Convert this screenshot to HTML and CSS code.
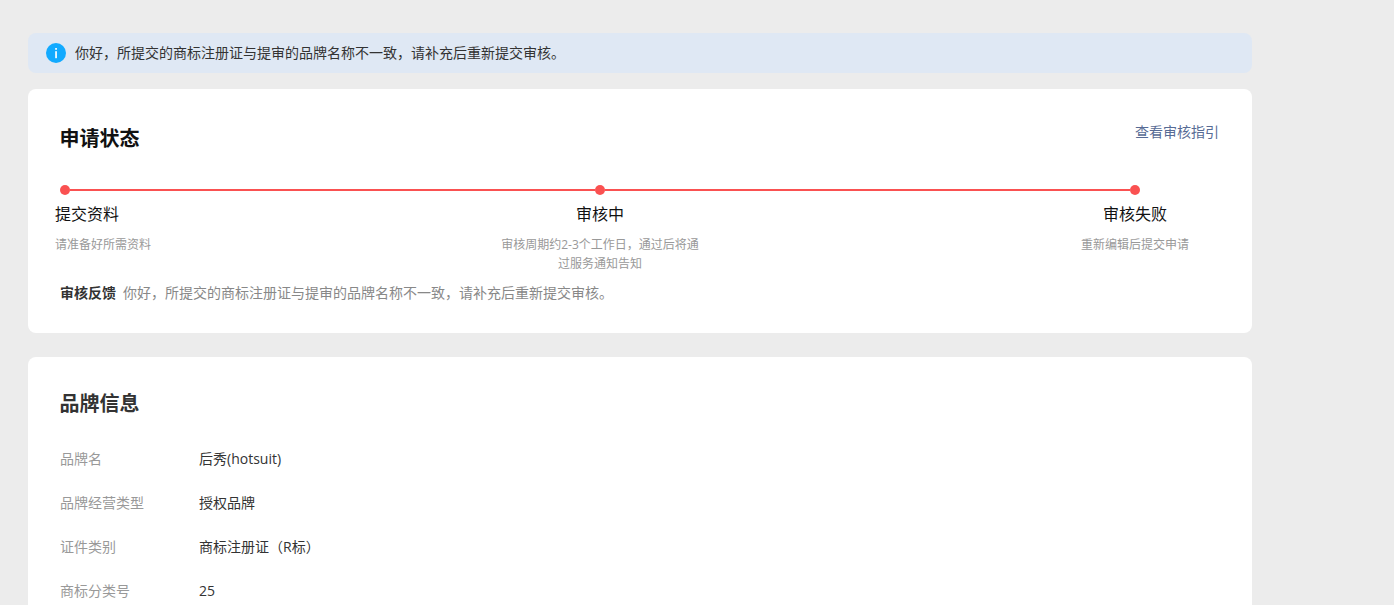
FILE: index.html
```html
<!DOCTYPE html>
<html lang="zh-CN">
<head>
<meta charset="utf-8">
<title>品牌信息</title>
<link rel="stylesheet" href="styles.css">
</head>
<body>
<main class="page">
  <div class="notice">
    <svg class="notice-icon" width="20" height="20" viewBox="0 0 20 20" aria-hidden="true">
      <circle cx="10" cy="10" r="10" fill="#12aaff"/>
      <rect x="9.2" y="8.2" width="1.7" height="7" fill="#fff"/>
      <rect x="9.2" y="5" width="1.7" height="1.8" fill="#fff"/>
    </svg>
    <span>你好，所提交的商标注册证与提审的品牌名称不一致，请补充后重新提交审核。</span>
  </div>

  <section class="card status-card">
    <div class="card-head">
      <h2 class="card-title title-dark">申请状态</h2>
      <a class="guide-link">查看审核指引</a>
    </div>
    <div class="track">
      <i class="dot"></i><i class="line"></i><i class="dot"></i><i class="line"></i><i class="dot"></i>
    </div>
    <div class="steps">
      <div class="step step-first">
        <div class="step-name">提交资料</div>
        <div class="step-desc">请准备好所需资料</div>
      </div>
      <div class="step step-mid">
        <div class="step-name">审核中</div>
        <div class="step-desc">审核周期约2-3个工作日，通过后将通过服务通知告知</div>
      </div>
      <div class="step step-last">
        <div class="step-name">审核失败</div>
        <div class="step-desc">重新编辑后提交申请</div>
      </div>
    </div>
    <div class="feedback">
      <strong class="feedback-label">审核反馈</strong>
      <span class="feedback-text">你好，所提交的商标注册证与提审的品牌名称不一致，请补充后重新提交审核。</span>
    </div>
  </section>

  <section class="card brand-card">
    <h2 class="card-title">品牌信息</h2>
    <dl class="info">
      <div class="info-row"><dt>品牌名</dt><dd>后秀(hotsuit)</dd></div>
      <div class="info-row"><dt>品牌经营类型</dt><dd>授权品牌</dd></div>
      <div class="info-row"><dt>证件类别</dt><dd>商标注册证（R标）</dd></div>
      <div class="info-row"><dt>商标分类号</dt><dd>25</dd></div>
    </dl>
  </section>
</main>
</body>
</html>
```

FILE: styles.css
```css
* { box-sizing: border-box; }
html, body { height: 100%; }
body {
  margin: 0;
  overflow: hidden;
  background: #ececec;
  font-family: "Open Sans", "Noto Sans CJK SC", sans-serif;
  font-size: 14px;
  color: #333;
}
.page {
  width: 1224px;
  margin-left: 28px;
  padding-top: 33px;
}
.notice {
  display: flex;
  align-items: center;
  gap: 9px;
  height: 40px;
  padding-left: 18px;
  padding-bottom: 1px;
  margin-bottom: 16px;
  border-radius: 8px;
  background: #dfe8f4;
  font-size: 14px;
  line-height: 22px;
  color: #333;
}
.notice-icon { flex: none; }
.card {
  background: #fff;
  border-radius: 8px;
  padding: 32px;
}
.status-card { height: 244px; margin-bottom: 24px; }
.brand-card { height: 400px; padding-top: 30px; }
.card-head {
  display: flex;
  justify-content: space-between;
  align-items: flex-start;
  height: 61px;
}
.card-title {
  margin: 0 0 0 -0.5px;
  font-size: 20px;
  line-height: 34px;
  font-weight: 700;
  color: #333;
}
.status-card .card-title { padding-top: 1px; }
.title-dark { color: #111; }
.guide-link {
  font-size: 14px;
  line-height: 22px;
  color: #576b95;
  margin-right: 1px;
}
.track {
  display: flex;
  align-items: center;
  width: 1080px;
  height: 16px;
}
.dot {
  flex: none;
  width: 10px;
  height: 10px;
  border-radius: 50%;
  background: #fa5151;
}
.line {
  flex: 1;
  height: 2px;
  background: #fa5151;
}
.steps {
  display: flex;
  margin: 0 -15px 0 -5px;
}
.step { flex: none; width: 200px; text-align: center; }
.step-first { width: 445px; text-align: left; }
.step-last { margin-left: 335px; }
.step-name {
  font-size: 16px;
  line-height: 24px;
  margin-top: 4px;
  color: #111;
}
.step-desc {
  margin-top: 9px;
  font-size: 12px;
  line-height: 19px;
  color: #999;
}
.feedback {
  display: flex;
  gap: 7px;
  margin-top: 9px;
  font-size: 14px;
  line-height: 22px;
}
.feedback-label { font-weight: 700; color: #333; }
.feedback-text { color: #888; }
.brand-card .card-title { margin-bottom: 15px; }
.info { margin: 0; }
.info-row {
  display: flex;
  height: 44px;
  align-items: center;
  font-size: 14px;
}
.info dt { width: 139px; color: #999; font-size: 14px; }
.info dd { margin: 0; color: #333; }
```
